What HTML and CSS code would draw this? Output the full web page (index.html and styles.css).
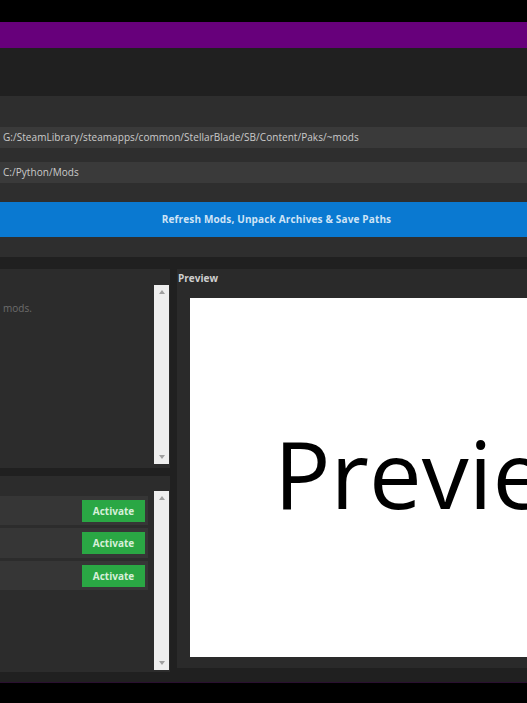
FILE: index.html
```html
<!DOCTYPE html>
<html>
<head>
<meta charset="utf-8">
<link rel="stylesheet" href="styles.css">
</head>
<body>
<div class="app">
  <div class="top-black"></div>
  <div class="titlebar"></div>
  <div class="toolbar"></div>
  <div class="settings">
    <div class="field">G:/SteamLibrary/steamapps/common/StellarBlade/SB/Content/Paks/~mods</div>
    <div class="field field-2">C:/Python/Mods</div>
    <div class="action">Refresh Mods, Unpack Archives &amp; Save Paths</div>
  </div>
  <div class="divider"></div>
  <div class="workspace">
    <div class="left">
      <div class="panel panel-top">
        <div class="list-area">
          <div class="hint">mods.</div>
        </div>
        <div class="scrollbar sb-top">
          <span class="arrow up"></span>
          <span class="arrow down"></span>
        </div>
      </div>
      <div class="panel panel-bottom">
        <div class="rows">
          <div class="row"><div class="activate">Activate</div></div>
          <div class="row"><div class="activate">Activate</div></div>
          <div class="row"><div class="activate">Activate</div></div>
        </div>
        <div class="scrollbar sb-bottom">
          <span class="arrow up"></span>
          <span class="arrow down"></span>
        </div>
      </div>
    </div>
    <div class="preview">
      <div class="preview-label">Preview</div>
      <div class="preview-box"><span class="preview-text">Preview</span></div>
    </div>
  </div>
  <div class="bottom-black"></div>
</div>
</body>
</html>
```

FILE: styles.css
```css
html, body {
  margin: 0;
  padding: 0;
  background: #000;
  overflow: hidden;
}
.app {
  width: 527px;
  height: 703px;
  overflow: hidden;
  font-family: "Open Sans", "Liberation Sans", sans-serif;
}
.top-black {
  height: 22px;
  background: #000;
}
.titlebar {
  height: 26px;
  background: #67007b;
}
.toolbar {
  height: 48px;
  background: #202020;
}
.settings {
  background: #2e2e2e;
  padding-top: 31px;
  padding-bottom: 20px;
}
.field {
  height: 21px;
  line-height: 21px;
  background: #3a3a3a;
  color: #cbcbcb;
  font-size: 10px;
  padding-left: 3px;
  margin-bottom: 14px;
  white-space: nowrap;
  letter-spacing: 0.05px;
}
.field-2 {
  margin-bottom: 19px;
}
.action {
  height: 35px;
  line-height: 35px;
  background: #0a79d1;
  color: #cfe4f6;
  font-weight: bold;
  font-size: 10px;
  letter-spacing: 0.15px;
  text-align: center;
  padding-left: 26px;
  white-space: nowrap;
}
.divider {
  height: 11px;
  background: #202020;
}
.workspace {
  display: flex;
  height: 413px;
  background: #202020;
  padding-top: 1px;
}
.left {
  width: 170px;
  flex-shrink: 0;
  display: flex;
  flex-direction: column;
  gap: 8px;
}
.panel {
  background: #2c2c2c;
  display: flex;
}
.panel-top {
  height: 199px;
}
.panel-bottom {
  height: 196px;
}
.list-area {
  flex: 1;
  padding-top: 32px;
}
.hint {
  color: #6c6c6c;
  font-size: 10px;
  padding-left: 3px;
}
.scrollbar {
  width: 15px;
  flex-shrink: 0;
  margin-right: 1px;
  background: #efefef;
  display: flex;
  flex-direction: column;
  justify-content: space-between;
  align-items: center;
  padding: 5px 0;
  box-sizing: border-box;
}
.sb-top {
  margin-top: 16px;
  margin-bottom: 4px;
}
.sb-bottom {
  margin-top: 15px;
  margin-bottom: 2px;
}
.arrow {
  width: 0;
  height: 0;
  border-left: 3px solid transparent;
  border-right: 3px solid transparent;
}
.arrow.up {
  border-bottom: 4px solid #a0a0a0;
}
.arrow.down {
  border-top: 4px solid #a0a0a0;
}
.rows {
  flex: 1;
  padding-top: 20px;
  padding-right: 6px;
  display: flex;
  flex-direction: column;
  gap: 3px;
}
.row {
  height: 29px;
  background: #363636;
  display: flex;
  align-items: center;
  justify-content: flex-end;
  padding-right: 3px;
}
.row:nth-child(2) {
  height: 30px;
}
.activate {
  width: 63px;
  height: 22px;
  line-height: 22px;
  background: #2aa744;
  color: #d6efd9;
  font-weight: bold;
  font-size: 10px;
  text-align: center;
}
.preview {
  flex: 1;
  min-width: 0;
  margin-left: 7px;
  height: 399px;
  background: #2a2a2a;
  display: flex;
  flex-direction: column;
}
.preview-label {
  color: #cfcfcf;
  font-weight: bold;
  font-size: 10px;
  height: 29px;
  line-height: 18px;
  padding-left: 1px;
}
.preview-box {
  margin-left: 13px;
  height: 359px;
  background: #fff;
  padding-top: 128px;
  padding-left: 84px;
  box-sizing: border-box;
  white-space: nowrap;
  overflow: hidden;
}
.preview-text {
  font-family: "Open Sans", sans-serif;
  font-size: 94px;
  line-height: 1;
  color: #000;
  display: block;
}
.bottom-black {
  height: 21px;
  background: #000;
  border-top: 1px solid #2a0f30;
}
```
